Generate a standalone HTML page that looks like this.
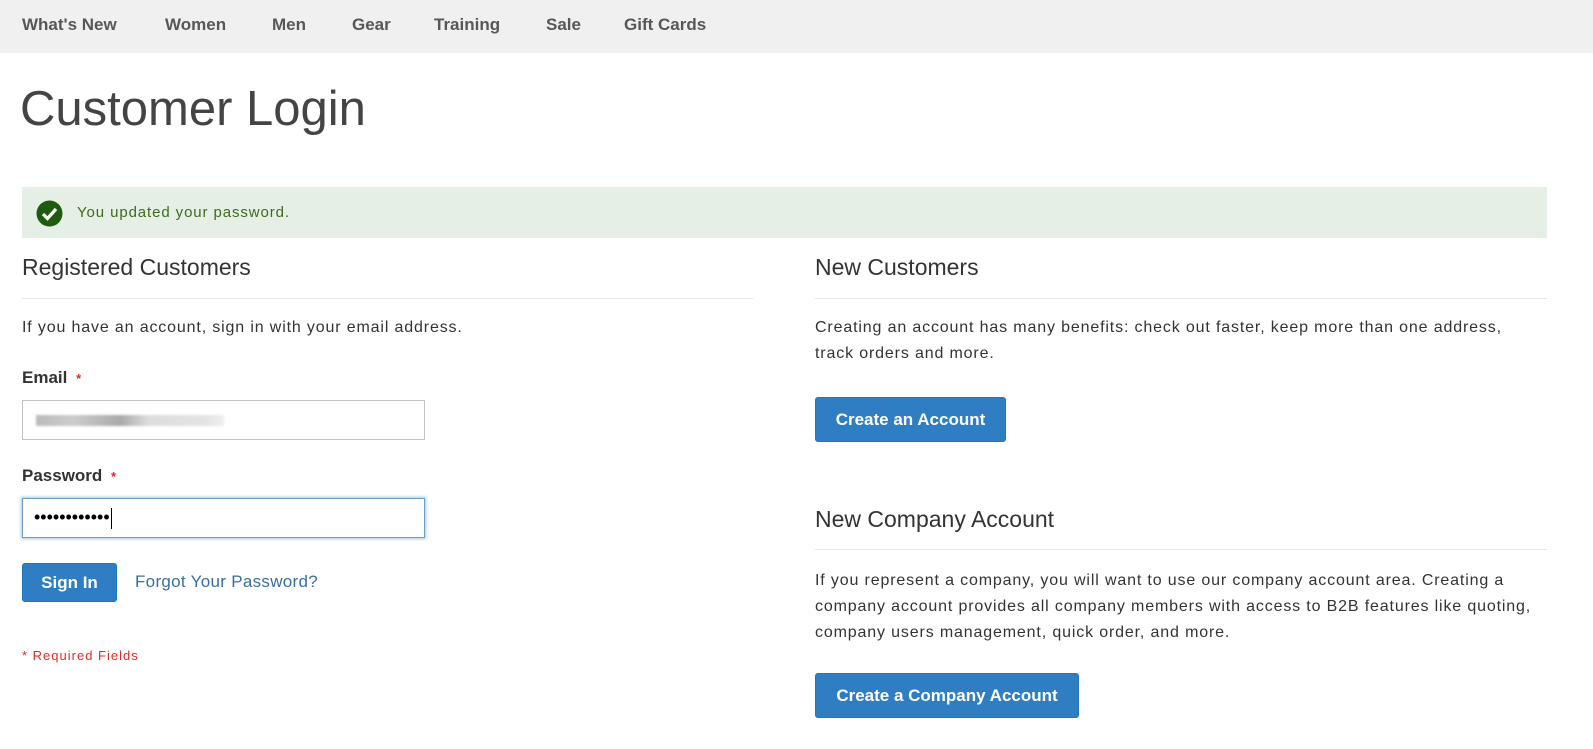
<!DOCTYPE html>
<html><head><meta charset="utf-8"><style>
*{margin:0;padding:0;box-sizing:border-box}
body{width:1593px;height:749px;background:#fff;font-family:"Liberation Sans",sans-serif;color:#333;position:relative;overflow:hidden}
.a{position:absolute;white-space:nowrap}
.nav{position:absolute;left:0;top:0;width:1593px;height:53px;background:#f0f0f0}
.nav span{position:absolute;top:15px;font-size:17px;font-weight:bold;color:#575757}
h2{position:absolute;font-weight:300;font-size:23px;color:#333;white-space:nowrap}
.hr{position:absolute;height:1px;background:#e5e5e5}
.t{position:absolute;font-size:16px;line-height:26px;color:#333;letter-spacing:0.85px;white-space:nowrap}
.btn{position:absolute;background:#2f7dc2;color:#fff;font-weight:bold;font-size:17px;border-radius:3px;border:1px solid #1979c3;text-align:center}
.inp{position:absolute;border:1px solid #c2c2c2;background:#fff}
</style></head><body>
<div class="nav">
<span style="left:22px">What's New</span><span style="left:165px">Women</span><span style="left:272px">Men</span><span style="left:352px">Gear</span><span style="left:434px">Training</span><span style="left:546px">Sale</span><span style="left:624px">Gift Cards</span>
</div>
<div class="a" style="left:20px;top:81px;font-size:49px;font-weight:300;color:#444">Customer Login</div>
<div class="a" style="left:22px;top:187px;width:1525px;height:51px;background:#e5efe5"></div>
<svg class="a" style="left:36px;top:200px" width="27" height="27" viewBox="0 0 27 27"><circle cx="13.5" cy="13.5" r="13" fill="#1f5b0f"/><path d="M7 14l4.5 4.5L20 9" stroke="#fff" stroke-width="3.2" fill="none"/></svg>
<div class="a" style="left:77px;top:204px;font-size:15px;color:#3d6b1c;letter-spacing:0.9px">You updated your password.</div>
<h2 style="left:22px;top:254px">Registered Customers</h2>
<div class="hr" style="left:22px;top:298px;width:731px"></div>
<div class="t" style="left:22px;top:315px">If you have an account, sign in with your email address.</div>
<div class="a" style="left:22px;top:368px;font-size:17px;font-weight:bold;color:#333">Email <span style="color:#e02b27;font-size:13px;margin-left:4px">*</span></div>
<div class="inp" style="left:22px;top:400px;width:403px;height:40px"><div style="position:absolute;left:13px;top:14px;width:188px;height:11px;background:linear-gradient(90deg,#bbb,#ccc 20%,#aaa 45%,#ddd 60%,#e4e4e4 90%,#eee);filter:blur(1px)"></div></div>
<div class="a" style="left:22px;top:466px;font-size:17px;font-weight:bold;color:#333">Password <span style="color:#e02b27;font-size:13px;margin-left:4px">*</span></div>
<div class="inp" style="left:22px;top:498px;width:403px;height:40px;border-color:#6d9fc7;box-shadow:0 0 3px 1px #a9c6dd"><div style="position:absolute;left:11px;top:8px;font-size:18px;letter-spacing:0px;color:#000">••••••••••••</div><div style="position:absolute;left:88px;top:9px;width:1px;height:21px;background:#000"></div></div>
<div class="btn" style="left:22px;top:563px;width:95px;height:39px;line-height:37px">Sign In</div>
<div class="a" style="left:135px;top:572px;font-size:17px;color:#3a6da6;letter-spacing:0.3px">Forgot Your Password?</div>
<div class="a" style="left:22px;top:648px;font-size:13px;color:#e02b27;letter-spacing:1px">* Required Fields</div>
<h2 style="left:815px;top:254px">New Customers</h2>
<div class="hr" style="left:815px;top:298px;width:732px"></div>
<div class="t" style="left:815px;top:315px">Creating an account has many benefits: check out faster, keep more than one address,<br>track orders and more.</div>
<div class="btn" style="left:815px;top:397px;width:191px;height:45px;line-height:43px">Create an Account</div>
<h2 style="left:815px;top:506px">New Company Account</h2>
<div class="hr" style="left:815px;top:549px;width:732px"></div>
<div class="t" style="left:815px;top:568px">If you represent a company, you will want to use our company account area. Creating a<br>company account provides all company members with access to B2B features like quoting,<br>company users management, quick order, and more.</div>
<div class="btn" style="left:815px;top:673px;width:264px;height:45px;line-height:43px">Create a Company Account</div>
</body></html>
